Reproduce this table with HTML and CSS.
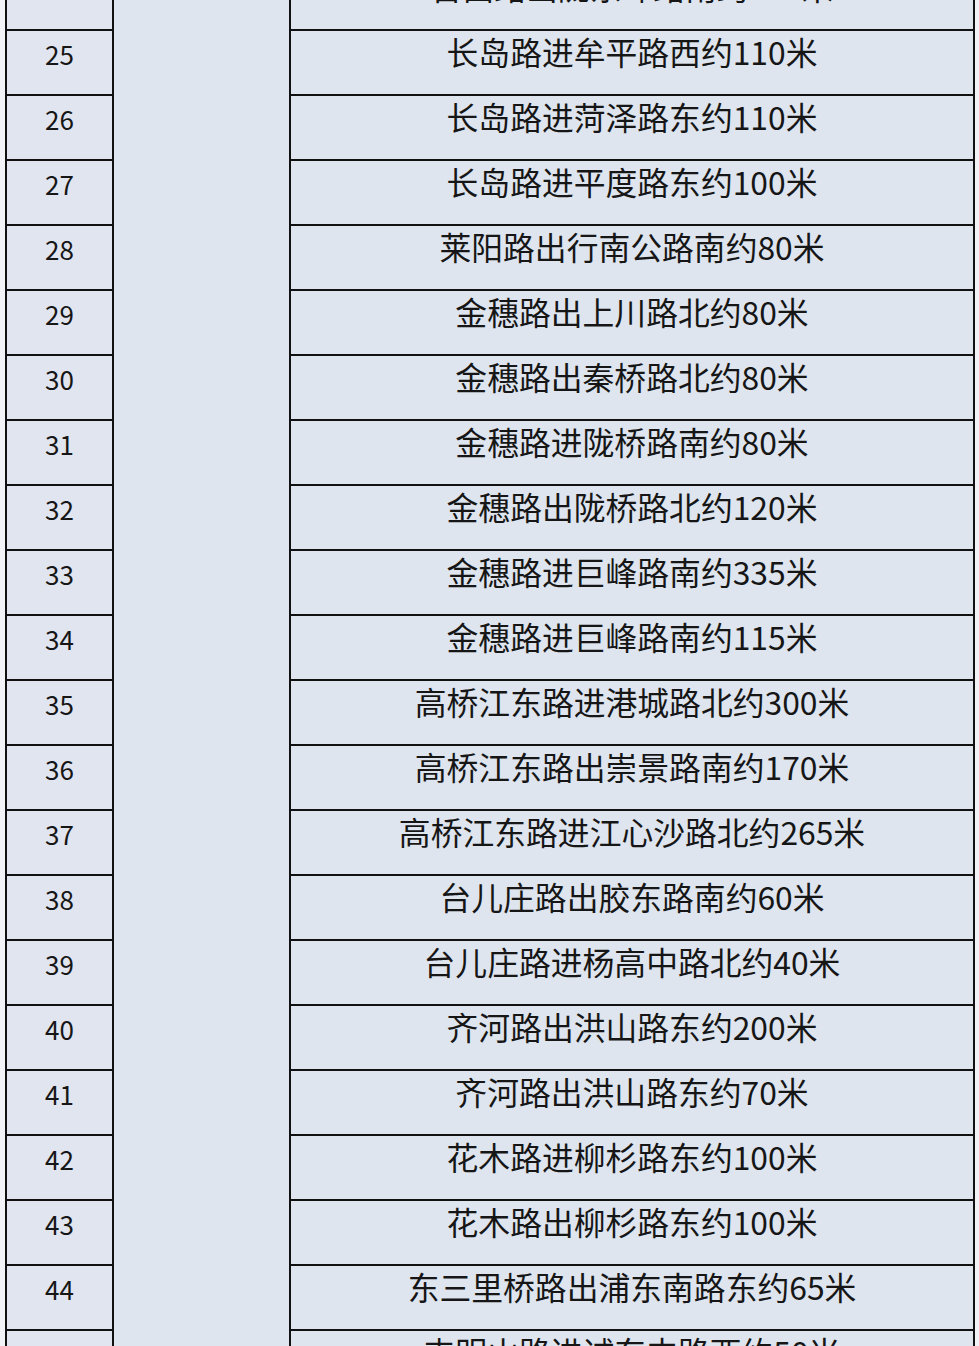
FILE: index.html
```html
<!DOCTYPE html>
<html lang="zh-CN">
<head>
<meta charset="utf-8">
<title>点位表</title>
<link rel="stylesheet" href="styles.css">
</head>
<body>
<div class="page">
<table class="grid">
<tbody>
<tr><td class="num">24</td><td class="blank" rowspan="22"></td><td class="loc">台西路出陇东环路南约100米</td></tr>
<tr><td class="num">25</td><td class="loc">长岛路进牟平路西约110米</td></tr>
<tr><td class="num">26</td><td class="loc">长岛路进菏泽路东约110米</td></tr>
<tr><td class="num">27</td><td class="loc">长岛路进平度路东约100米</td></tr>
<tr><td class="num">28</td><td class="loc">莱阳路出行南公路南约80米</td></tr>
<tr><td class="num">29</td><td class="loc">金穗路出上川路北约80米</td></tr>
<tr><td class="num">30</td><td class="loc">金穗路出秦桥路北约80米</td></tr>
<tr><td class="num">31</td><td class="loc">金穗路进陇桥路南约80米</td></tr>
<tr><td class="num">32</td><td class="loc">金穗路出陇桥路北约120米</td></tr>
<tr><td class="num">33</td><td class="loc">金穗路进巨峰路南约335米</td></tr>
<tr><td class="num">34</td><td class="loc">金穗路进巨峰路南约115米</td></tr>
<tr><td class="num">35</td><td class="loc">高桥江东路进港城路北约300米</td></tr>
<tr><td class="num">36</td><td class="loc">高桥江东路出崇景路南约170米</td></tr>
<tr><td class="num">37</td><td class="loc">高桥江东路进江心沙路北约265米</td></tr>
<tr><td class="num">38</td><td class="loc">台儿庄路出胶东路南约60米</td></tr>
<tr><td class="num">39</td><td class="loc">台儿庄路进杨高中路北约40米</td></tr>
<tr><td class="num">40</td><td class="loc">齐河路出洪山路东约200米</td></tr>
<tr><td class="num">41</td><td class="loc">齐河路出洪山路东约70米</td></tr>
<tr><td class="num">42</td><td class="loc">花木路进柳杉路东约100米</td></tr>
<tr><td class="num">43</td><td class="loc">花木路出柳杉路东约100米</td></tr>
<tr><td class="num">44</td><td class="loc">东三里桥路出浦东南路东约65米</td></tr>
<tr><td class="num">45</td><td class="loc">屯明山路进诚东中路西约50米</td></tr>
</tbody>
</table>
</div>
</body>
</html>
```
FILE: styles.css
```css
html, body {
  margin: 0;
  padding: 0;
  background: #f1f3f6;
  overflow: hidden;
}
.page {
  width: 979px;
  height: 1346px;
  overflow: hidden;
  padding: 0 4px 0 5px;
  box-sizing: border-box;
}
.grid {
  margin-top: -36px;
  width: 970px;
  border-collapse: collapse;
  table-layout: fixed;
  background: #dee5ef;
  font-family: "Noto Sans CJK SC", "Noto Sans", sans-serif;
  color: #161616;
}
.grid td {
  border: 2px solid #111;
  height: 65px;
  padding: 0 0 22px 0;
  box-sizing: border-box;
  text-align: center;
  vertical-align: middle;
  line-height: 1;
  white-space: nowrap;
}
.grid td.num {
  width: 107px;
  font-size: 26px;
  padding-bottom: 17px;
  background: #e1e5f0;
}
.blank {
  width: 177px;
}
.loc {
  font-size: 31.8px;
}
```
